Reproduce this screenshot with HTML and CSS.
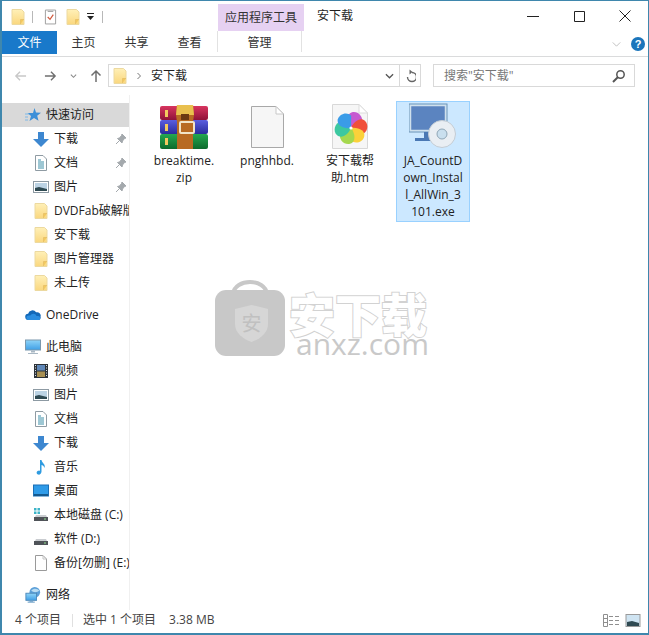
FILE: index.html
```html
<!DOCTYPE html>
<html lang="zh-CN">
<head>
<meta charset="utf-8">
<title>安下载</title>
<link rel="stylesheet" href="styles.css">
</head>
<body>
<svg class="defs" width="0" height="0" aria-hidden="true">
  <defs>
    <linearGradient id="fg" x1="0" y1="0" x2="0" y2="1"><stop offset="0" stop-color="#fff0b8"/><stop offset="1" stop-color="#fad77e"/></linearGradient>
    <linearGradient id="sc" x1="0" y1="0" x2="0" y2="1"><stop offset="0" stop-color="#8fd4f8"/><stop offset="1" stop-color="#3f9fe6"/></linearGradient>
    <linearGradient id="red" x1="0" y1="0" x2="0" y2="1"><stop offset="0" stop-color="#d8355f"/><stop offset="1" stop-color="#8f1238"/></linearGradient>
    <linearGradient id="blue" x1="0" y1="0" x2="0" y2="1"><stop offset="0" stop-color="#5a5ee0"/><stop offset="1" stop-color="#2a2c9c"/></linearGradient>
    <linearGradient id="green" x1="0" y1="0" x2="0" y2="1"><stop offset="0" stop-color="#25a850"/><stop offset="1" stop-color="#0d6a2c"/></linearGradient>
    <symbol id="folder" viewBox="0 0 16 16"><path d="M2 .5h9.500l2.500 2.500v12.500H2z" fill="url(#fg)" stroke="#ecd9a0"/><path d="M10.500 15V10.500H14" fill="#f3c95f" stroke="#e9c36a"/></symbol>
    <symbol id="down" viewBox="0 0 16 16"><path d="M5 1h6v7h5l-8 8-8-8h5z" fill="#3d87d0"/></symbol>
    <symbol id="doc" viewBox="0 0 16 16"><path d="M2.500.5H10l3.500 3.500v11.500h-11z" fill="#fff" stroke="#8f9ba3"/><path d="M5 5h3M5 7h6M5 9h6M5 11h6M5 13h6" stroke="#3d8fa8"/></symbol>
    <symbol id="pic" viewBox="0 0 16 16"><rect x=".5" y="2.500" width="15" height="11" fill="#fff" stroke="#8d9aa3"/><rect x="2" y="4" width="12" height="8" fill="#bcd3e4"/><path d="M2 9l4-1 8 2v2H2z" fill="#2f4a52"/></symbol>
    <symbol id="pin" viewBox="0 0 12 12"><path d="M7 1l4 4-1.500.5L7.500 8 7 10 2.500 5.500l2-.5L6.500 2.500zM4 8l-3 3" fill="#a4a9ad" stroke="#a4a9ad"/></symbol>
    <symbol id="star" viewBox="0 0 16 16"><path d="M9.500 1l1.500 4.500 5 .3-3.800 3 1.300 5L9 11l-4.500 3 1.500-5L2.500 6H8z" fill="#3b8fd8"/><path d="M0 7h4M0 10h3M0 13h3" stroke="#7fb8e6"/></symbol>
    <symbol id="cloud" viewBox="0 0 18 12"><path d="M4 11.500a3.500 3.500 0 0 1-.5-7A5 5 0 0 1 12.500 3a4 4 0 0 1 5 5 3 3 0 0 1-1.500 3.500z" fill="#1268b8"/><path d="M4 11.500a2.500 2.500 0 0 1 0-5h2A4 4 0 0 1 13 7h2a2.500 2.500 0 0 1 1 4.500z" fill="#2a8de0"/></symbol>
    <symbol id="pc" viewBox="0 0 16 16"><rect x=".5" y="1" width="15" height="10" fill="url(#sc)" stroke="#7a98ad"/><path d="M6 11.500h4v2H6zM3 14h10v1H3z" fill="#a9b8c4"/></symbol>
    <symbol id="film" viewBox="0 0 16 16"><rect x="1" y="1" width="14" height="14" fill="#2c3238"/><rect x="4" y="2" width="8" height="5.500" fill="#5f87b8"/><rect x="4" y="8.500" width="8" height="5.500" fill="#a78f52"/><path d="M2 2.500h1M2 5h1M2 7.500h1M2 10h1M2 12.500h1M13 2.500h1M13 5h1M13 7.500h1M13 10h1M13 12.500h1" stroke="#dfe3e6"/></symbol>
    <symbol id="music" viewBox="0 0 16 16"><path d="M7 1h1.500c.3 3 4.500 4 3 8-.5-2-2-3-3-3v6.500C8.500 15 6.500 16 5 15.500S3 13 4.500 12 7 11.500 7 12z" fill="#2f9be0"/></symbol>
    <symbol id="desk" viewBox="0 0 16 16"><rect x=".5" y="2" width="15" height="11" fill="#2f9be8" stroke="#1b6fb5"/><path d="M1 11h14v2H1z" fill="#14598f"/></symbol>
    <symbol id="drive" viewBox="0 0 16 16"><path d="M2 10l1-2h10l1 2z" fill="#c9ccd0"/><rect x="1" y="10" width="14" height="4" fill="#4f5358"/><rect x="11" y="11.500" width="2" height="1" fill="#8fe08f"/></symbol>
    <symbol id="cdrive" viewBox="0 0 16 16"><use href="#drive" width="16" height="16"/><path d="M1 1h2.500v2.500H1zM4.500 1H7v2.500H4.500zM1 4.500h2.500V7H1zM4.500 4.500H7V7H4.500z" fill="#3db4c8"/></symbol>
    <symbol id="page" viewBox="0 0 16 16"><path d="M2.500.5H10l3.500 3.500v11.500h-11z" fill="#fff" stroke="#9a9a9a"/><path d="M10 .5V4h3.500" fill="none" stroke="#c4c4c4"/></symbol>
    <symbol id="net" viewBox="0 0 18 18"><circle cx="11" cy="6" r="6" fill="#5b9fd8"/><path d="M7 4c3-3 7-2 9 0-2 2-6 3-9 0z" fill="#b9dcf2"/><rect x="1" y="7" width="12" height="8" fill="url(#sc)" stroke="#4b87b8"/><path d="M5 15.500h4v1H5z" fill="#6fa4cc"/><path d="M3 17h8" stroke="#4b87b8"/></symbol>
    <path id="petal" d="M0 0C-3-7-1-15 5-15S15-8 12-3z"/>
  </defs>
</svg>

<div class="window">
  <header class="titlebar">
    <div class="qat">
      <svg class="i16"><use href="#folder"/></svg>
      <span class="qsep"></span>
      <svg class="qcheck" viewBox="0 0 14 16"><path d="M1.500.5h11v15h-11z" fill="#fff" stroke="#9a9a9a"/><path d="M4 8l2.500 2.500L10 5.500" fill="none" stroke="#d0583c" stroke-width="1.300"/><path d="M4 2h6" stroke="#9a9a9a"/></svg>
      <svg class="i16"><use href="#folder"/></svg>
      <svg class="qdrop" viewBox="0 0 7 7"><path d="M0 0h7v1H0z" fill="#222"/><path d="M0 3h7L3.500 7z" fill="#222"/></svg>
      <span class="qsep last"></span>
    </div>
    <div class="ctxtab">应用程序工具</div>
    <div class="title">安下载</div>
    <div class="winbtns">
      <svg viewBox="0 0 12 12"><path d="M0 6.500h12" stroke="#222"/></svg>
      <svg viewBox="0 0 12 12"><path d="M1.500 1.500h10v10h-10z" fill="none" stroke="#222"/></svg>
      <svg viewBox="0 0 12 12"><path d="M.5.500l11 11M11.500.500l-11 11" stroke="#222"/></svg>
    </div>
  </header>

  <nav class="tabs">
    <div class="tab file">文件</div>
    <div class="tab">主页</div>
    <div class="tab">共享</div>
    <div class="tab">查看</div>
    <div class="tab manage">管理</div>
    <svg class="collapse" viewBox="0 0 10 6"><path d="M.5.500L5 5 9.500.500" fill="none" stroke="#b5b5b5"/></svg>
    <div class="help">?</div>
  </nav>

  <div class="addrrow">
    <svg class="nav back" viewBox="0 0 14 12"><path d="M13 6H2M6.500 1.500L2 6l4.500 4.500" fill="none" stroke="#c8c8c8" stroke-width="1.500"/></svg>
    <svg class="nav fwd" viewBox="0 0 14 12"><path d="M1 6h11M7.500 1.500L12 6l-4.500 4.500" fill="none" stroke="#6f6f6f" stroke-width="1.500"/></svg>
    <svg class="nav drop" viewBox="0 0 8 6"><path d="M1 1.500L4 4.500l3-3" fill="none" stroke="#8a8a8a" stroke-width="1.200"/></svg>
    <svg class="nav up" viewBox="0 0 12 14"><path d="M6 13V2M1.500 6.500L6 2l4.500 4.500" fill="none" stroke="#6f6f6f" stroke-width="1.500"/></svg>
    <div class="addr">
      <svg class="i16"><use href="#folder"/></svg>
      <svg class="crumb" viewBox="0 0 6 8"><path d="M1.500 1L4.500 4l-3 3" fill="none" stroke="#777"/></svg>
      <span class="path">安下载</span>
      <svg class="addrdrop" viewBox="0 0 10 6"><path d="M1 1l4 4 4-4" fill="none" stroke="#555" stroke-width="1.400"/></svg>
      <span class="refresh"><svg viewBox="0 0 12 14"><path d="M8 3.500A4.500 4.500 0 1 1 3.500 8" fill="none" stroke="#666" stroke-width="1.400"/><path d="M5.500.500v5l3-2.500z" fill="#666"/></svg></span>
    </div>
    <div class="search">
      <span>搜索"安下载"</span>
      <svg viewBox="0 0 14 14"><circle cx="8.500" cy="5.500" r="3.700" fill="none" stroke="#555" stroke-width="1.500"/><path d="M6 8l-5 5" stroke="#555" stroke-width="2"/></svg>
    </div>
  </div>

  <div class="main">
    <aside class="side">
      <section class="group">
        <div class="row top active"><svg class="ic"><use href="#star"/></svg>快速访问</div>
        <div class="row"><svg class="ic"><use href="#down"/></svg>下载<svg class="pin"><use href="#pin"/></svg></div>
        <div class="row"><svg class="ic"><use href="#doc"/></svg>文档<svg class="pin"><use href="#pin"/></svg></div>
        <div class="row"><svg class="ic"><use href="#pic"/></svg>图片<svg class="pin"><use href="#pin"/></svg></div>
        <div class="row"><svg class="ic"><use href="#folder"/></svg>DVDFab破解版</div>
        <div class="row"><svg class="ic"><use href="#folder"/></svg>安下载</div>
        <div class="row"><svg class="ic"><use href="#folder"/></svg>图片管理器</div>
        <div class="row"><svg class="ic"><use href="#folder"/></svg>未上传</div>
      </section>
      <section class="group">
        <div class="row top"><svg class="ic"><use href="#cloud"/></svg>OneDrive</div>
      </section>
      <section class="group">
        <div class="row top"><svg class="ic"><use href="#pc"/></svg>此电脑</div>
        <div class="row"><svg class="ic"><use href="#film"/></svg>视频</div>
        <div class="row"><svg class="ic"><use href="#pic"/></svg>图片</div>
        <div class="row"><svg class="ic"><use href="#doc"/></svg>文档</div>
        <div class="row"><svg class="ic"><use href="#down"/></svg>下载</div>
        <div class="row"><svg class="ic"><use href="#music"/></svg>音乐</div>
        <div class="row"><svg class="ic"><use href="#desk"/></svg>桌面</div>
        <div class="row"><svg class="ic"><use href="#cdrive"/></svg>本地磁盘 (C:)</div>
        <div class="row"><svg class="ic"><use href="#drive"/></svg>软件 (D:)</div>
        <div class="row"><svg class="ic"><use href="#page"/></svg>备份[勿删] (E:)</div>
      </section>
      <section class="group">
        <div class="row top"><svg class="ic"><use href="#net"/></svg>网络</div>
      </section>
    </aside>

    <section class="files">
      <div class="file-item">
        <svg class="big" viewBox="0 0 48 48">
          <g transform="translate(0 2)">
          <rect x="0" y="1" width="48" height="14" rx="2" fill="url(#red)"/><rect x="0" y="15" width="48" height="14" rx="2" fill="url(#blue)"/><rect x="0" y="29" width="48" height="15" rx="2" fill="url(#green)"/>
          <rect x="5" y="5" width="3" height="7" fill="#f3c95f"/><rect x="5" y="19" width="3" height="7" fill="#f3c95f"/><rect x="5" y="33" width="3" height="7" fill="#f3c95f"/>
          <path d="M17 0h16l1 10-1 7v27H17V17l-1-7z" fill="#b86a22"/><path d="M17 0h16l1 10H16z" fill="#e9c04e"/>
          <rect x="20" y="17" width="14" height="11" rx="1" fill="none" stroke="#f1e4c8" stroke-width="2"/><rect x="21" y="9" width="8" height="6" fill="#6b3a12"/>
          </g>
        </svg>
        <div class="name">breaktime.<br>zip</div>
      </div>
      <div class="file-item">
        <svg class="big" viewBox="0 0 48 48"><path d="M8.500 3.500H33L40.500 11v33.500h-32z" fill="#f6f6f6" stroke="#a8a8a8"/><path d="M33 3.500V11h7.500z" fill="#fff" stroke="#c8c8c8"/></svg>
        <div class="name">pnghhbd.</div>
      </div>
      <div class="file-item">
        <svg class="big" viewBox="0 0 48 48">
          <path d="M6.500 1.500H33L41.500 10v35.500h-35z" fill="#f6f6f6" stroke="#d8d8d8"/><path d="M33 1.500V10h8.500z" fill="#fff" stroke="#dcdcdc"/>
          <g transform="translate(25 25)">
            <use href="#petal" fill="#c65ad0" transform="rotate(-15)"/>
            <use href="#petal" fill="#f0503a" transform="rotate(45)"/>
            <use href="#petal" fill="#fbd13a" transform="rotate(105)"/>
            <use href="#petal" fill="#a5d84e" transform="rotate(165)"/>
            <use href="#petal" fill="#3cc8a0" transform="rotate(225)"/>
            <use href="#petal" fill="#3a9ce8" transform="rotate(285)"/>
            <circle r="1.600" fill="#fff"/>
          </g>
        </svg>
        <div class="name">安下载帮<br>助.htm</div>
      </div>
      <div class="file-item selected">
        <svg class="big" viewBox="0 0 48 48">
          <rect x="1.500" y="2.500" width="35" height="25" fill="#5b84c0" stroke="#cfe0ec" stroke-width="1.500"/>
          <rect x="0" y="1" width="38" height="28" fill="none" stroke="#6b92b4"/>
          <path d="M15 29h6v6H15zM6 35h24v3H6z" fill="#4a78b4"/>
          <circle cx="33" cy="31" r="13.500" fill="#e9eef3" stroke="#c3ccd4"/>
          <circle cx="33" cy="31" r="5" fill="#c9dfee" stroke="#8fa6b6"/>
        </svg>
        <div class="name">JA_CountD<br>own_Instal<br>l_AllWin_3<br>101.exe</div>
      </div>
    </section>
  </div>

  <footer class="status">
    <span class="count">4 个项目</span>
    <span class="ssep"></span>
    <span class="sel">选中 1 个项目</span>
    <span class="size">3.38 MB</span>
    <svg class="views" viewBox="0 0 38 13">
      <path d="M.5.500h4v12h-4zM.5 4.500h4M.5 8.500h4" fill="none" stroke="#8f8f8f"/>
      <path d="M6 2.500h4M12 2.500h4M6 6.500h4M12 6.500h4M6 10.500h4M12 10.500h4" stroke="#8f8f8f"/>
      <rect x="23" y=".5" width="14" height="12" fill="#cfe4f2" stroke="#9a9a9a"/><path d="M24 8l5-1 7 2v3H24z" fill="#2f4a52"/>
    </svg>
  </footer>

  <div class="mark">
    <svg class="bag" viewBox="0 0 70 80">
      <path d="M18 18C20 2 50 2 52 18" fill="none" stroke="#c8c8c8" stroke-width="4"/>
      <rect x="0" y="14" width="70" height="66" rx="11" fill="#c8c8c8"/>
      <path d="M36.500 29l16.500 4v15c0 9-8 15-16.500 18C28 63 20 57 20 48V33z" fill="#d6d6d6"/>
      <text x="36.500" y="55" class="bagtext">安</text>
    </svg>
    <div class="marktext">
      <div class="cn">安下载</div>
      <div class="en">anxz.com</div>
    </div>
  </div>
</div>
</body>
</html>
```
FILE: styles.css
```css
* { box-sizing: border-box; }
html, body { margin: 0; padding: 0; }
body {
  width: 649px;
  height: 635px;
  overflow: hidden;
  background: #fff;
  font: 12px/16px "Open Sans", "Noto Sans CJK SC", sans-serif;
  color: #1f1f1f;
}
.defs { position: absolute; }
.window {
  position: relative;
  width: 649px;
  height: 635px;
  border: solid #3f87ad;
  border-width: 1px 1px 2px 2px;
  display: flex;
  flex-direction: column;
  background: #fff;
}

/* title bar */
.titlebar { height: 30px; display: flex; flex: none; }
.qat { width: 216px; flex: none; display: flex; align-items: center; padding: 1px 0 0 8px; }
.i16 { width: 16px; height: 16px; flex: none; }
.qsep { width: 1px; height: 12px; background: #b8b8b8; margin: 0 11px 0 6px; }
.qsep.last { margin: 0 0 0 8px; }
.qcheck { width: 13px; height: 16px; flex: none; margin-right: 8px; }
.qdrop { width: 7px; height: 7px; margin-left: 6px; }
.ctxtab {
  width: 86px;
  margin-top: 3px;
  background: #e6d1f2;
  text-align: center;
  line-height: 27px;
  color: #333;
}
.title { margin-left: 13px; line-height: 30px; }
.winbtns { margin-left: auto; display: flex; gap: 34px; padding: 9px 17px 0 0; }
.winbtns svg { width: 12px; height: 12px; }

/* tabs */
.tabs {
  height: 26px;
  flex: none;
  display: flex;
  align-items: flex-start;
  border-bottom: 1px solid #dadbdc;
}
.tab { width: 53px; height: 23px; line-height: 23px; text-align: center; color: #333; }
.tab.file { width: 55px; background: #1979ca; color: #fff; }
.tab.manage {
  width: 85px;
  height: 21px;
  border: solid #e2e2e2;
  border-width: 0 1px;
  margin-left: 1px;
}
.collapse { width: 9px; height: 5px; margin: 11px 0 0 310px; }
.help {
  width: 14px;
  height: 14px;
  margin: 6px 0 0 10px;
  border-radius: 50%;
  background: #1b75bb;
  color: #fff;
  font: bold 11px/14px "Liberation Sans", sans-serif;
  text-align: center;
}

/* address row */
.addrrow { height: 38px; flex: none; display: flex; align-items: center; padding-bottom: 1px; }
.nav { flex: none; }
.nav.back { width: 13px; height: 12px; margin-left: 12px; }
.nav.fwd { width: 13px; height: 12px; margin-left: 17px; }
.nav.drop { width: 7px; height: 6px; margin-left: 13px; }
.nav.up { width: 12px; height: 14px; margin-left: 13px; }
.addr {
  width: 313px;
  height: 23px;
  margin-left: 6px;
  border: 1px solid #d9d9d9;
  display: flex;
  align-items: center;
  padding-left: 3px;
}
.crumb { width: 6px; height: 8px; margin-left: 8px; }
.path { margin-left: 9px; }
.addrdrop { width: 9px; height: 6px; margin-left: auto; margin-right: 5px; }
.refresh { width: 21px; height: 21px; border-left: 1px solid #d9d9d9; display: flex; align-items: center; justify-content: center; }
.refresh svg { width: 12px; height: 14px; }
.search {
  width: 202px;
  height: 23px;
  margin-left: 12px;
  border: 1px solid #d9d9d9;
  display: flex;
  align-items: center;
  justify-content: space-between;
  padding: 0 8px 0 10px;
  color: #777;
}
.search svg { width: 14px; height: 14px; }

/* main */
.main { flex: 1; display: flex; min-height: 0; }
.side {
  width: 127px;
  flex: none;
  padding-top: 8px;
  overflow: hidden;
  display: flex;
  flex-direction: column;
  gap: 8px;
}
.row {
  height: 24px;
  display: flex;
  align-items: center;
  gap: 5px;
  padding-left: 31px;
  white-space: nowrap;
  overflow: hidden;
  position: relative;
  color: #222;
}
.row.top { padding-left: 23px; }
.row.active { background: #d9d9d9; }
.ic { width: 16px; height: 16px; flex: none; }
.pin { position: absolute; left: 113px; top: 6px; width: 12px; height: 12px; }

.files { flex: 1; display: flex; align-items: flex-start; gap: 9px; padding: 6px 0 0 17px; border-left: 1px solid #f0f0f0; }
.file-item {
  width: 74px;
  height: 121px;
  flex: none;
  border: 1px solid transparent;
  display: flex;
  flex-direction: column;
  align-items: center;
  padding-top: 1px;
}
.file-item.selected { background: #cce8ff; border-color: #99d1ff; }
.big { width: 48px; height: 48px; flex: none; }
.name { margin-top: 1px; line-height: 17px; text-align: center; color: #222; white-space: nowrap; }

/* status bar */
.status { height: 23px; flex: none; display: flex; align-items: center; padding: 0 0 3px 13px; color: #444; }
.ssep { width: 1px; height: 13px; background: #e0e0e0; margin: 0 10px 0 11px; }
.size { margin-left: 13px; }
.views { width: 38px; height: 13px; margin-left: auto; margin-right: 7px; }

/* watermark */
.mark { position: absolute; left: 213px; top: 275px; display: flex; gap: 4px; pointer-events: none; }
.bag { width: 70px; height: 80px; flex: none; }
.bagtext { font-size: 20px; fill: #c0c0c0; text-anchor: middle; font-family: "Noto Sans CJK SC", sans-serif; }
.marktext { padding-top: 18px; }
.cn {
  font: 900 46px/36px "Noto Sans CJK SC", sans-serif;
  color: #fff;
  -webkit-text-stroke: 2px #d2d2d2;
  paint-order: stroke fill;
  white-space: nowrap;
}
.en { font: 30px/24px "Open Sans", sans-serif; color: #c9c9c9; white-space: nowrap; margin: 2px 0 0 7px; }
```
